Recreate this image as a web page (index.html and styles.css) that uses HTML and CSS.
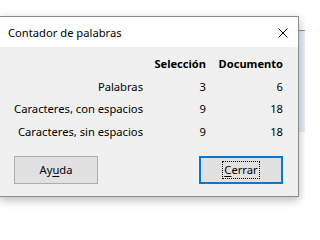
FILE: index.html
```html
<!DOCTYPE html>
<html lang="es">
<head>
<meta charset="utf-8">
<title>Contador de palabras</title>
<link rel="stylesheet" href="styles.css">
</head>
<body>
<div class="desktop">
  <div class="behind"></div>
  <div class="dialog">
    <div class="titlebar">
      <span class="title">Contador de palabras</span>
      <svg class="close" width="10" height="10" viewBox="0 0 10 10" aria-label="Cerrar">
        <path d="M0.5 0.5 L9.5 9.5 M9.5 0.5 L0.5 9.5" stroke="#000" stroke-width="1" fill="none"/>
      </svg>
    </div>
    <div class="content">
      <div class="stats">
        <div class="cell head"></div>
        <div class="cell head num">Selección</div>
        <div class="cell head num">Documento</div>

        <div class="cell label">Palabras</div>
        <div class="cell num">3</div>
        <div class="cell num">6</div>

        <div class="cell label">Caracteres, con espacios</div>
        <div class="cell num">9</div>
        <div class="cell num">18</div>

        <div class="cell label">Caracteres, sin espacios</div>
        <div class="cell num">9</div>
        <div class="cell num">18</div>
      </div>
      <div class="buttons">
        <button class="btn">Ay<u>u</u>da</button>
        <button class="btn default"><span class="focus"><u>C</u>errar</span></button>
      </div>
    </div>
  </div>
</div>
</body>
</html>
```

FILE: styles.css
```css
html, body {
  margin: 0;
  padding: 0;
  background: #ffffff;
}
body {
  font-family: "Noto Sans", "Open Sans", sans-serif;
  font-size: 11.2px;
  color: #000;
}
.desktop {
  position: relative;
  width: 305px;
  height: 213px;
  overflow: hidden;
  padding-top: 16px;
  box-sizing: border-box;
}
.behind {
  position: absolute;
  left: 290px;
  top: 30px;
  width: 40px;
  height: 101px;
  border-top: 1px solid #5b9bd5;
  background: #e6edf5;
}
.dialog {
  position: relative;
  width: 300px;
  margin-left: -1px;
  border: 1px solid #8c8c8c;
  box-sizing: border-box;
  background: #f0f0f0;
  box-shadow: 0 3px 9px rgba(0,0,0,0.28);
}
.titlebar {
  height: 30px;
  background: #ffffff;
  display: flex;
  align-items: center;
  justify-content: space-between;
  padding: 0 10px 0 8px;
}
.title {
  font-size: 11.2px;
}
.close {
  display: block;
  margin-top: 1px;
}
.content {
  padding: 5px 15px 12px 0;
}
.stats {
  display: grid;
  grid-template-columns: 143px 63px 77px;
  grid-auto-rows: 22.7px;
  align-items: center;
}
.cell {
  white-space: nowrap;
}
.label, .num {
  text-align: right;
}
.head {
  font-weight: bold;
  font-size: 11.1px;
}
.buttons {
  display: flex;
  justify-content: space-between;
  margin-top: 13px;
  padding-left: 14px;
}
.btn {
  width: 84px;
  height: 28px;
  box-sizing: border-box;
  font-family: inherit;
  font-size: 11.2px;
  color: #000;
  background: #e1e1e1;
  border: 1px solid #adadad;
  padding: 0;
  margin: 0;
  display: flex;
  align-items: center;
  justify-content: center;
}
.btn.default {
  border: 2px solid #0078d7;
}
.focus {
  outline: 1px dotted #000;
  outline-offset: 0;
  padding: 0 1px;
  line-height: 16px;
}
u {
  text-decoration-thickness: 1px;
  text-underline-offset: 2px;
}
```
